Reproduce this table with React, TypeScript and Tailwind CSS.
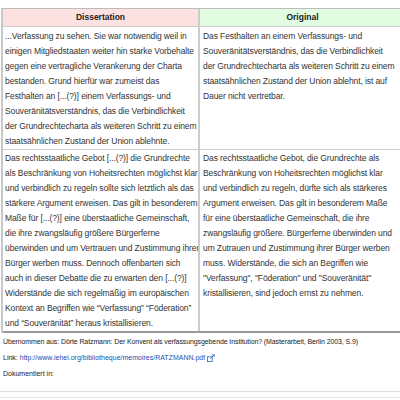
import React from "react";

const rows = [
  {
    left: [
      "...Verfassung zu sehen. Sie war notwendig weil in",
      "einigen Mitgliedstaaten weiter hin starke Vorbehalte",
      "gegen eine vertragliche Verankerung der Charta",
      "bestanden. Grund hierfür war zumeist das",
      "Festhalten an [...(?)] einem Verfassungs- und",
      "Souveränitätsverständnis, das die Verbindlichkeit",
      "der Grundrechtecharta als weiteren Schritt zu einem",
      "staatsähnlichen Zustand der Union ablehnte.",
    ],
    right: [
      "Das Festhalten an einem Verfassungs- und",
      "Souveränitätsverständnis, das die Verbindlichkeit",
      "der Grundrechtecharta als weiteren Schritt zu einem",
      "staatsähnlichen Zustand der Union ablehnt, ist auf",
      "Dauer nicht vertretbar.",
    ],
  },
  {
    left: [
      "Das rechtsstaatliche Gebot [...(?)] die Grundrechte",
      "als Beschränkung von Hoheitsrechten möglichst klar",
      "und verbindlich zu regeln sollte sich letztlich als das",
      "stärkere Argument erweisen. Das gilt in besonderem",
      "Maße für [...(?)] eine überstaatliche Gemeinschaft,",
      "die ihre zwangsläufig größere Bürgerferne",
      "überwinden und um Vertrauen und Zustimmung ihrer",
      "Bürger werben muss. Dennoch offenbarten sich",
      "auch in dieser Debatte die zu erwarten den [...(?)]",
      "Widerstände die sich regelmäßig im europäischen",
      "Kontext an Begriffen wie \u201cVerfassung\u201d \u201cFöderation\u201d",
      "und \u201cSouveränität\u201d heraus kristallisieren.",
    ],
    right: [
      "Das rechtsstaatliche Gebot, die Grundrechte als",
      "Beschränkung von Hoheitsrechten möglichst klar",
      "und verbindlich zu regeln, dürfte sich als stärkeres",
      "Argument erweisen. Das gilt in besonderem Maße",
      "für eine überstaatliche Gemeinschaft, die ihre",
      "zwangsläufig größere. Bürgerferne überwinden und",
      "um Zutrauen und Zustimmung ihrer Bürger werben",
      "muss. Widerstände, die sich an Begriffen wie",
      "\"Verfassung\", \"Föderation\" und \"Souveränität\"",
      "kristallisieren, sind jedoch ernst zu nehmen.",
    ],
  },
];

function Lines({ lines }: { lines: string[] }) {
  return (
    <>
      {lines.map((l, i) => (
        <div key={i} className="whitespace-nowrap">
          {l}
        </div>
      ))}
    </>
  );
}

export default function App() {
  return (
    <div className="w-[400px] h-[400px] overflow-hidden bg-white text-[#333] font-['Liberation_Sans',Arial,sans-serif]">
      <div className="pt-[8px]">
        <div className="w-[404px] border-l-[2px] border-[#c8c8c8] ml-[1px]">
          <div className="grid grid-cols-[197px_1fr] border-t border-[#bbb]">
            <div className="bg-[#fde0e0] text-center font-bold text-[8.5px] leading-[17px] text-[#222] border-r-[2px] border-[#ccc]">
              Dissertation
            </div>
            <div className="bg-[#e2fce2] text-center font-bold text-[8.5px] leading-[17px] text-[#222]">
              Original
            </div>
            {rows.map((r, i) => (
              <React.Fragment key={i}>
                <div
                  className={
                    "overflow-hidden border-r-[2px] border-t border-[#ccc] pl-[2px] text-[8.5px] tracking-[-0.1px] leading-[15px] " +
                    (i === 0 ? "pt-[2px]" : "pt-[1px]")
                  }
                >
                  <Lines lines={r.left} />
                </div>
                <div
                  className={
                    "overflow-hidden border-t border-[#ccc] pl-[3px] text-[8.5px] tracking-[-0.1px] leading-[15px] " +
                    (i === 0 ? "pt-[2px]" : "pt-[1px]")
                  }
                >
                  <Lines lines={r.right} />
                </div>
              </React.Fragment>
            ))}
          </div>
          <div className="h-[2px] bg-[#999]"></div>
        </div>
        <div className="text-[7px] leading-[16px] pl-[3px] pt-[1px] text-[#222]">
          <p className="whitespace-nowrap tracking-[-0.1px]">
            Übernommen aus: Dörte Ratzmann: Der Konvent als verfassungsgebende Institution? (Masterarbeit, Berlin 2003, S.9)
          </p>
          <p className="whitespace-nowrap flex items-center">
            <span>Link:&nbsp;</span>
            <span className="text-[#1a4fb0]">
              http://www.iehei.org/bibliotheque/memoires/RATZMANN.pdf
            </span>
            <svg className="ml-[2px]" width="8" height="8" viewBox="0 0 10 10">
              <rect x="0.5" y="3.5" width="6" height="6" fill="none" stroke="#3366bb" />
              <path d="M4 6 L9 1 M6 1 H9 V4" fill="none" stroke="#3366bb" />
            </svg>
          </p>
          <p>Dokumentiert in:</p>
        </div>
        <div className="mt-[9px] border-t border-[#ddd]"></div>
        <div className="mt-[5px] border-t border-[#e6e6e6]"></div>
      </div>
    </div>
  );
}
